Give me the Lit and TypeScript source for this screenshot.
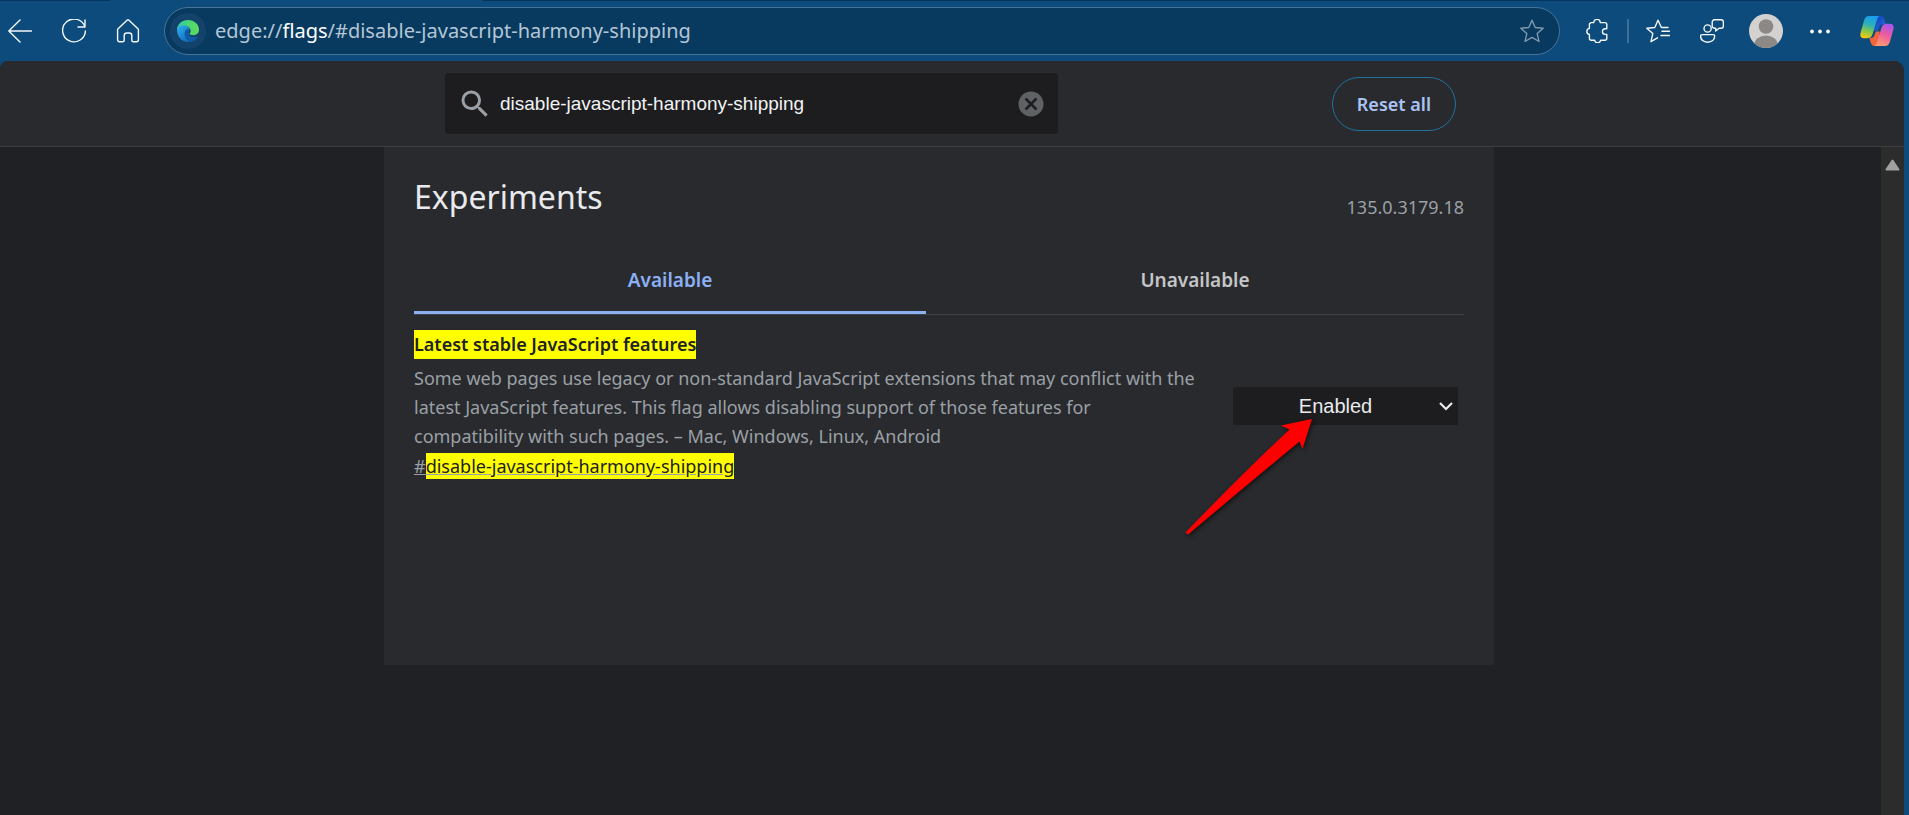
import { LitElement, html, css, svg } from "lit";
import { customElement, property, state } from "lit/decorators.js";

const stroke = (body: unknown) => html`
  <svg viewBox="0 0 24 24" width="24" height="24" fill="none" stroke="currentColor"
    stroke-width="1.4" stroke-linecap="round" stroke-linejoin="round" aria-hidden="true">${body}</svg>`;

const icons = {
  back: svg`<path d="M23.6 12H.8M12 .9.8 12 12 23.1"/>`,
  reload: svg`<path d="M22.9 8A11.4 11.4 0 1 0 23.4 12M23 1v7h-7"/>`,
  home: svg`<path d="M1.6 10.2 11 1.2a1.5 1.5 0 0 1 2 0l9.4 9V20.8A1.9 1.9 0 0 1 20.5 22.7h-3.2a1.5 1.5 0 0 1-1.5-1.5v-4.600a2.600 2.600 0 0 0-2.600-2.600h-2.400a2.600 2.600 0 0 0-2.600 2.600v4.600a1.500 1.500 0 0 1-1.500 1.500H3.500a1.900 1.900 0 0 1-1.900-1.900z"/>`,
  star: svg`<path d="m12 1.2 3.2 7.3 8 .8-6 5.3 1.8 7.9-7-4.1-7 4.1 1.8-7.900-6-5.300 8-.8z"/>`,
  puzzle: svg`<path d="M8.8 3.6a3.2 3.2 0 0 1 6.4 0h4.6a2 2 0 0 1 2 2v4.200h-1.600a2.800 2.800 0 0 0 0 5.600h1.600v3.900a2 2 0 0 1-2 2h-4.200a3 3 0 0 1-5.900 0H6.400a2 2 0 0 1-2-2v-3.800a3.100 3.100 0 0 1 0-6.100V5.600a2 2 0 0 1 2-2z"/>`,
  favorites: svg`<path d="M22 8.5h-6.6L12 1.2 8.8 8.5l-8 .8 6 5.300L5 22.600l6.500-3.800M16 12.300h7.400M15 16.500h8.400"/>`,
  people: svg`<circle cx="7.6" cy="9.5" r="3.6"/><path d="M2 15.6h11.2a1.5 1.5 0 0 1 1.5 1.5c0 3.8-3 6.1-7.1 6.1S.6 20.9.6 17.1A1.5 1.5 0 0 1 2 15.6zM14.4.8h6.8a2.200 2.200 0 0 1 2.200 2.200v4a2.200 2.200 0 0 1-2.200 2.200h-2.100L15.700 12V9.200h-1.300A2.200 2.200 0 0 1 12.200 7V3A2.200 2.200 0 0 1 14.400.8z"/>`,
};

@customElement("browser-toolbar")
class BrowserToolbar extends LitElement {
  static styles = css`
    :host { display: block; color: #f4f8fb; background: #0c4b7c; font-family: "Noto Sans", "Open Sans", sans-serif; }
    .strip { display: flex; height: 1px; background: #07345a; }
    .tab { margin-left: 110px; width: 373px; background: #0c4b7c; }
    .bar { display: flex; align-items: center; height: 60px; padding-right: 12px; }
    .group { display: flex; align-items: center; gap: 14px; }
    button { display: grid; place-items: center; width: 40px; height: 40px; padding: 0; border: 0; background: none; color: inherit; }
    .address {
      flex: 1; display: flex; align-items: center; gap: 9px; min-width: 0; height: 48px; box-sizing: border-box;
      margin: 0 17px 0 16px; padding: 0 7px 0 5px; border: 1px solid #477399; border-radius: 24px; background: #083a5f;
    }
    .site { display: grid; place-items: center; width: 36px; height: 36px; border-radius: 50%; background: #13436b; }
    .url { flex: 1; min-width: 0; overflow: hidden; white-space: nowrap; font-size: 20px; line-height: 28px; color: #b4c6d6; text-decoration: none; }
    .host { color: #fff; }
    .star { color: #8099ae; }
    .divider { width: 2px; height: 24px; margin: 0 9px 0 10px; background: #3a7099; }
    .copilot { margin-left: 17px; }
  `;
  render() {
    return html`
      <div class="strip"><span class="tab"></span></div>
      <div class="bar">
        <nav class="group">
          <button aria-label="Back">${stroke(icons.back)}</button>
          <button aria-label="Refresh">${stroke(icons.reload)}</button>
          <button aria-label="Home">${stroke(icons.home)}</button>
        </nav>
        <div class="address">
          <span class="site">
            <svg viewBox="0 0 24 24" width="24" height="24" aria-hidden="true">
              <defs>
                <linearGradient id="eb" x1="0" y1="0" x2="1" y2="1"><stop offset="0" stop-color="#2fb4ea"/><stop offset=".5" stop-color="#1b83d0"/><stop offset="1" stop-color="#11569d"/></linearGradient>
                <linearGradient id="eg" x1="0" y1="0" x2="1" y2="0"><stop offset="0" stop-color="#34c7b8"/><stop offset=".4" stop-color="#43d47d"/><stop offset="1" stop-color="#62dc5c"/></linearGradient>
              </defs>
              <path fill="url(#eb)" d="M1 11c0 7 5 12 11 12 4 0 7.500-1.800 9.300-4.600.3-.5 0-.8-.5-.6-4 1.800-8.600-.3-8.600-4.300 0-1.300.5-2 1.300-2.700C12.500 7.500 9.500 5.500 6.500 5.500 3 5.500 1 8 1 11z"/>
              <path fill="#0f5ba8" d="M9 12c-1.400 4.800 1 9.600 5 10.800 3-.5 5.700-2 7.300-4.400.3-.5 0-.8-.5-.6-4 1.800-8.600-.3-8.600-4.300 0-1.300.5-2 1.300-2.700C12 9.800 9.800 10 9 12z"/>
              <path fill="url(#eg)" d="M1 11C1.200 5 6 1 12 1c6.500 0 11 4.600 11 9.600 0 3.600-2.700 5.700-5.500 5.700-2.400 0-3.900-.8-3.900-1.500 0-.6 1-1.100 1-2.700 0-3-3-5.600-7-5.600C4 6.500 1.500 8.500 1 11z"/>
            </svg>
          </span>
          <a class="url" href="#disable-javascript-harmony-shipping">edge://<span class="host">flags</span>/#disable-javascript-harmony-shipping</a>
          <button class="star" aria-label="Add to favorites">${stroke(icons.star)}</button>
        </div>
        <button aria-label="Extensions">${stroke(icons.puzzle)}</button>
        <span class="divider"></span>
        <div class="group">
          <button aria-label="Favorites">${stroke(icons.favorites)}</button>
          <button aria-label="Feedback">${stroke(icons.people)}</button>
          <button aria-label="Profile">
            <svg viewBox="0 0 34 34" width="34" height="34" aria-hidden="true">
              <clipPath id="ac"><circle cx="17" cy="17" r="17"/></clipPath>
              <g clip-path="url(#ac)"><path fill="#d4d2d1" d="M0 0h34v34H0z"/><circle cx="17" cy="12.5" r="7.3" fill="#8b8886"/><ellipse cx="17" cy="31" rx="11.8" ry="9.4" fill="#8b8886"/></g>
            </svg>
          </button>
          <button aria-label="Settings and more">
            <svg viewBox="0 0 24 24" width="24" height="24" fill="currentColor" aria-hidden="true"><circle cx="4" cy="12.5" r="1.9"/><circle cx="12" cy="12.5" r="1.9"/><circle cx="20" cy="12.5" r="1.9"/></svg>
          </button>
        </div>
        <button class="copilot" aria-label="Copilot">
          <svg viewBox="0 0 34 30" width="34" height="30" aria-hidden="true">
            <defs>
              <linearGradient id="c1" x1=".6" y1="0" x2=".35" y2="1"><stop offset="0" stop-color="#1a9cf0"/><stop offset=".4" stop-color="#2bb0b8"/><stop offset=".7" stop-color="#86c84a"/><stop offset="1" stop-color="#f4c80e"/></linearGradient>
              <linearGradient id="c2" x1=".7" y1="0" x2=".35" y2="1"><stop offset="0" stop-color="#a556ee"/><stop offset=".45" stop-color="#ea5aa4"/><stop offset="1" stop-color="#ff9a6c"/></linearGradient>
              <linearGradient id="c3" x1="0" y1="0" x2="1" y2="1"><stop offset="0" stop-color="#123bb0"/><stop offset="1" stop-color="#2a6fe6"/></linearGradient>
            </defs>
            <path fill="url(#c3)" d="M14 0h6.500c2.500 0 3.400 1.700 4 4l1.200 4.200H23c-2.500 0-3.600 1.500-4.400 4l-.8 2.500h-4z"/>
            <path fill="#f2643c" d="M19 30h-4.500c-2.500 0-3.300-1.700-4-4l-1.200-4.200h2c2 0 3-1.600 3.600-3.800l.8-2.500h4z"/>
            <path fill="url(#c1)" d="M9 0h11.500c-2.400 0-3.100 2.300-3.900 5l-3.700 12c-.9 3-2.200 5.200-5.700 5.200H4C.8 22.200-.3 20 .6 16.800L4 4.500C5 1.200 6.300 0 9 0z"/>
            <path fill="url(#c2)" d="M25 30H13.500c2.400 0 3.100-2.300 3.900-5l3.700-12c.9-3 2.200-5.200 5.700-5.200H30c3.200 0 4.300 2.200 3.400 5.400L30 25.500c-1 3.300-2.300 4.500-5 4.500z"/>
          </svg>
        </button>
      </div>`;
  }
}

@customElement("flag-row")
class FlagRow extends LitElement {
  @property() name = "";
  @property() description = "";
  @property() flag = "";
  static styles = css`
    :host { display: flex; align-items: center; gap: 32px; padding: 15px 6px 0 0; }
    .text { flex: 1; min-width: 0; }
    h2, p { margin: 0; font-size: 18px; }
    h2 { font-weight: 600; line-height: 29px; }
    mark { background: #ff0; color: #202124; }
    h2 mark { display: inline-block; vertical-align: top; }
    .description { margin-top: 5px; line-height: 29px; color: #9aa0a6; }
    .id { display: block; margin-top: 1px; font-size: 18px; line-height: 29px; color: #9aa0a6; }
    .id mark { padding: 1px 0; }
    .control { position: relative; }
    select {
      appearance: none; display: block; width: 225px; height: 38px; margin: 0; padding: 0 20px 0 0; border: 0; border-radius: 0;
      background: #1d1d1f; color: #e8eaed; font: 20px "Liberation Sans", sans-serif; text-align: center; text-align-last: center;
    }
    .chevron { position: absolute; right: 5px; top: 12px; pointer-events: none; }
    .pointer { position: absolute; left: -50px; top: 30px; overflow: visible; pointer-events: none; filter: drop-shadow(1px 2px 2px rgba(0, 0, 0, 0.6)); }
  `;
  render() {
    return html`
      <div class="text">
        <h2><mark>${this.name}</mark></h2>
        <p class="description">${this.description}</p>
        <a class="id" href="#${this.flag}">#<mark>${this.flag}</mark></a>
      </div>
      <div class="control">
        <select aria-label=${this.name}>
          <option>Default</option><option selected>Enabled</option><option>Disabled</option>
        </select>
        <svg class="chevron" width="14" height="14" viewBox="0 0 14 14" fill="none" stroke="#e8eaed" stroke-width="2.2" aria-hidden="true"><path d="M1 4l6 6 6-6"/></svg>
        <svg class="pointer" width="132" height="120" viewBox="0 0 132 120" aria-hidden="true">
          <path fill="#f00" d="M129 2 98 8.500l8.500 4Q60 56 2.500 115.500L5 117.500Q58 73 116.500 24.500L119.500 32z"/>
        </svg>
      </div>`;
  }
}

@customElement("app-root")
class AppRoot extends LitElement {
  @state() query = "disable-javascript-harmony-shipping";
  static styles = css`
    :host { display: flex; flex-direction: column; min-height: 100vh; background: #0c4b7c; color: #e8eaed; font-family: "Noto Sans", "Open Sans", sans-serif; }
    .page { flex: 1; display: flex; flex-direction: column; margin-right: 5px; border-radius: 8px 10px 0 0; overflow: hidden; background: #202124; }
    header { padding-right: 26px; border-bottom: 1px solid #3c3e41; background: #292a2d; }
    .head { display: flex; align-items: center; justify-content: space-between; gap: 24px; max-width: 1110px; height: 85px; box-sizing: border-box; margin: 0 auto; padding: 0 38px 0 61px; }
    .search { display: flex; align-items: center; flex: 0 1 613px; height: 61px; border-radius: 4px; background: #1d1d1f; }
    .search label { display: flex; padding: 0 7px 0 12px; }
    input { flex: 1; min-width: 0; padding: 0; border: 0; outline: 0; background: none; color: #f1f3f4; font: 19px "Liberation Sans", sans-serif; }
    .clear { display: flex; margin: 0 14px; padding: 0; border: 0; background: none; }
    .reset { height: 54px; padding: 0 24px; border: 1px solid #1f739c; border-radius: 27px; background: none; color: #a9c3f5; font: 600 18px "Noto Sans", sans-serif; }
    .body { flex: 1; display: flex; }
    main { flex: 1; min-width: 0; padding-right: 3px; }
    .panel { max-width: 1110px; min-height: 518px; box-sizing: border-box; margin: 0 auto; padding: 28px 30px; background: #292a2d; }
    .title { display: flex; align-items: flex-end; justify-content: space-between; }
    h1 { margin: 0; font-size: 32px; font-weight: 400; line-height: 44px; }
    .version { font-size: 18px; line-height: 24px; color: #9aa0a6; }
    .tabs { display: grid; grid-template-columns: 512fr 538fr; margin-top: 28px; border-bottom: 1px solid #3f4246; }
    .tabs button { padding: 20px 0 18px; border: 0; border-bottom: 3px solid transparent; background: none; color: #c4c5c7; font: 600 19px/26px "Noto Sans", sans-serif; }
    .tabs .active { border-color: #8ab0f2; color: #8cb0f5; }
    .scroll { display: flex; justify-content: center; width: 23px; padding-top: 12px; background: #2c2c2c; }
  `;
  render() {
    return html`
      <browser-toolbar></browser-toolbar>
      <div class="page">
        <header>
          <div class="head">
            <div class="search">
              <label for="q" aria-label="Search flags">
                <svg width="36" height="36" viewBox="0 0 24 24" fill="#9aa0a6" aria-hidden="true"><path d="M15.500 14h-.79l-.28-.27A6.470 6.470 0 0 0 16 9.500 6.500 6.500 0 1 0 9.500 16c1.610 0 3.090-.59 4.230-1.570l.27.28v.79l5 4.990L20.490 19zm-6 0C7.010 14 5 11.990 5 9.500S7.010 5 9.500 5 14 7.010 14 9.500 11.990 14 9.500 14z"/></svg>
              </label>
              <input id="q" type="text" .value=${this.query} @input=${(e: Event) => (this.query = (e.target as HTMLInputElement).value)}>
              <button class="clear" aria-label="Clear search" @click=${() => (this.query = "")}>
                <svg width="26" height="26" viewBox="0 0 26 26" aria-hidden="true"><circle cx="13" cy="13" r="12.5" fill="#5f6265"/><path d="m7.500 7.500 11 11m0-11-11 11" stroke="#1d1d1f" stroke-width="2.5"/></svg>
              </button>
            </div>
            <button class="reset">Reset all</button>
          </div>
        </header>
        <div class="body">
          <main>
            <section class="panel">
              <div class="title"><h1>Experiments</h1><span class="version">135.0.3179.18</span></div>
              <div class="tabs" role="tablist">
                <button class="active" role="tab" aria-selected="true">Available</button>
                <button role="tab" aria-selected="false">Unavailable</button>
              </div>
              <flag-row
                name="Latest stable JavaScript features"
                description="Some web pages use legacy or non-standard JavaScript extensions that may conflict with the latest JavaScript features. This flag allows disabling support of those features for compatibility with such pages. – Mac, Windows, Linux, Android"
                flag="disable-javascript-harmony-shipping"></flag-row>
            </section>
          </main>
          <div class="scroll">
            <svg width="15" height="12" viewBox="0 0 15 12" aria-hidden="true"><path d="M7.500 1.500 13.500 10.500h-12z" fill="#a0a0a0" stroke="#a0a0a0" stroke-width="2" stroke-linejoin="round"/></svg>
          </div>
        </div>
      </div>`;
  }
}
